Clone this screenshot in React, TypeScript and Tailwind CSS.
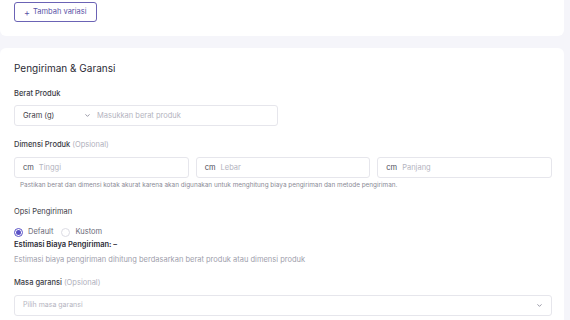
export default function App() {
  return (
    <div className="w-[570px] h-[320px] overflow-hidden bg-[#f5f5fa] font-['Inter',sans-serif] text-[#2d2d3a]">
      <div className="w-[564px] flex flex-col gap-[12px]">
        {/* Variasi card (tail) */}
        <div className="bg-white rounded-b-[6px] h-[36px] pl-[14px] pt-[2px]">
          <button className="h-[20px] px-[9px] border border-[#6b63b5] rounded-[3px] text-[7.5px] text-[#5a52a6] flex items-center gap-[3px]">
            <span className="text-[9px] leading-none">+</span>
            <span>Tambah variasi</span>
          </button>
        </div>

        {/* Pengiriman & Garansi */}
        <div className="bg-white rounded-t-[6px] h-[300px] px-[14px] pt-[13px]">
          <h2 className="text-[10px] text-[#2b2b35] leading-[14px]">Pengiriman &amp; Garansi</h2>

          <div className="mt-[14px] text-[7.5px] font-medium leading-[10px] text-[#3a3a45]">Berat Produk</div>
          <div className="mt-[6px] w-[264px] h-[21px] border border-[#e6e6ec] rounded-[3px] flex items-center text-[7.5px]">
            <div className="w-[80px] pl-[8px] flex items-center justify-between pr-[4px]">
              <span className="text-[#3a3a45]">Gram (g)</span>
              <svg width="7" height="7" viewBox="0 0 24 24" fill="none" stroke="#8a8a99" strokeWidth="3" strokeLinecap="round" strokeLinejoin="round"><path d="M6 9l6 6 6-6" /></svg>
            </div>
            <span className="ml-[2px] text-[#b4b4c0]">Masukkan berat produk</span>
          </div>

          <div className="mt-[14px] text-[7.5px] font-medium leading-[10px] text-[#3a3a45]">
            Dimensi Produk <span className="font-normal text-[#b0b0bc]">(Opsional)</span>
          </div>
          <div className="mt-[7px] w-[538px] grid grid-cols-3 gap-[7px]">
            {["Tinggi", "Lebar", "Panjang"].map((p) => (
              <div key={p} className="h-[21px] border border-[#e6e6ec] rounded-[3px] flex items-center gap-[5px] pl-[8px] text-[7.5px]">
                <span className="text-[#4a4a55]">cm</span>
                <span className="text-[#b4b4c0]">{p}</span>
              </div>
            ))}
          </div>
          <p className="mt-[3px] pl-[6px] text-[6.4px] text-[#8a8a96] leading-[8px]">
            Pastikan berat dan dimensi kotak akurat karena akan digunakan untuk menghitung biaya pengiriman dan metode pengiriman.
          </p>

          <div className="mt-[18px] text-[7.5px] leading-[10px] text-[#3a3a45]">Opsi Pengiriman</div>
          <div className="mt-[10px] flex items-center gap-[8px] text-[7.5px] leading-[10px]">
            <label className="flex items-center gap-[5px]">
              <span className="w-[9px] h-[9px] rounded-full border border-[#5a52c6] flex items-center justify-center">
                <span className="w-[5px] h-[5px] rounded-full bg-[#5a52c6]" />
              </span>
              <span className="text-[#6a6a78]">Default</span>
            </label>
            <label className="flex items-center gap-[5px]">
              <span className="w-[9px] h-[9px] rounded-full border border-[#dcdce4]" />
              <span className="text-[#6a6a78]">Kustom</span>
            </label>
          </div>
          <div className="mt-[3px] text-[7.5px] font-semibold leading-[10px] text-[#2b2b35]">Estimasi Biaya Pengiriman: –</div>
          <p className="mt-[5px] text-[7.5px] leading-[9px] text-[#a0a0ac]">
            Estimasi biaya pengiriman dihitung berdasarkan berat produk atau dimensi produk
          </p>

          <div className="mt-[14px] text-[7.5px] font-medium leading-[10px] text-[#3a3a45]">
            Masa garansi <span className="font-normal text-[#b0b0bc]">(Opsional)</span>
          </div>
          <div className="mt-[7px] w-[538px] h-[21px] border border-[#e6e6ec] rounded-[3px] flex items-center justify-between pl-[8px] pr-[8px] text-[7px]">
            <span className="text-[#b4b4c0]">Pilih masa garansi</span>
            <svg width="7" height="7" viewBox="0 0 24 24" fill="none" stroke="#8a8a99" strokeWidth="3" strokeLinecap="round" strokeLinejoin="round"><path d="M6 9l6 6 6-6" /></svg>
          </div>
        </div>
      </div>
    </div>
  );
}
